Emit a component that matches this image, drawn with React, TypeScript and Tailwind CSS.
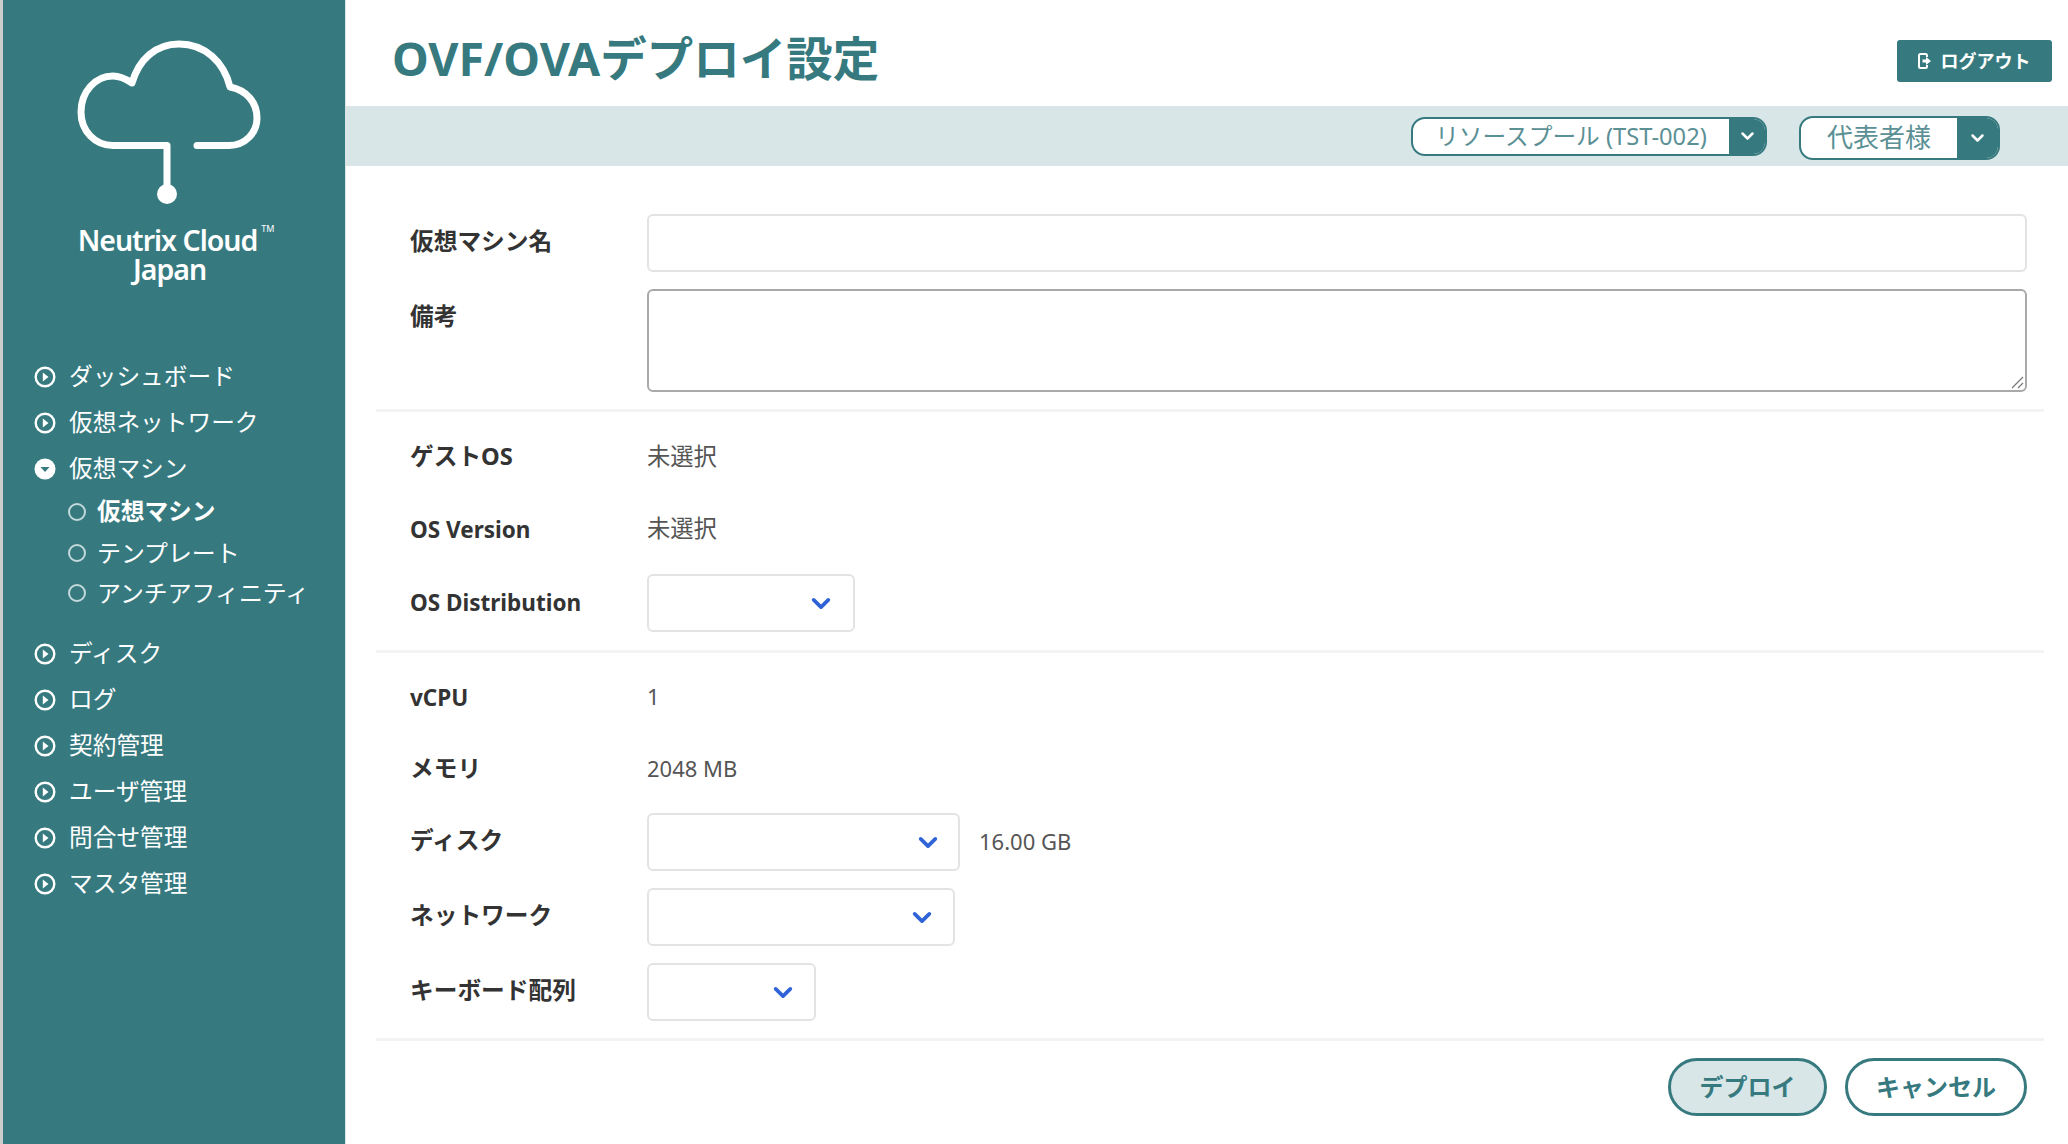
import React from "react";

function Chevron({ className }: { className: string }) {
  return (
    <svg viewBox="0 0 18 12" className={className} fill="none" stroke="currentColor" strokeWidth="3" strokeLinecap="round" strokeLinejoin="round">
      <path d="M3 3l6 6 6-6" />
    </svg>
  );
}

function Logo() {
  return (
    <svg viewBox="0 0 342 210" className="w-[342px] h-[210px] block" fill="none">
      <path
        d="M194 145.500H226C242 145.500 254 133 254 118C254 102 243 90 227 87C221 62 202 44 176 44C153 44 136 59 129 83C123 79 117 76 110 76C92 76 78 92 78 112C78 131 92 145.500 110 145.500H164V185"
        stroke="#fff"
        strokeWidth="7"
        strokeLinecap="round"
        strokeLinejoin="round"
      />
      <circle cx="164" cy="194" r="10" fill="#fff" />
    </svg>
  );
}

function NavIcon({ open }: { open?: boolean }) {
  return open ? (
    <svg viewBox="0 0 22 22" className="w-[22px] h-[22px] shrink-0">
      <circle cx="11" cy="11" r="10.5" fill="#fff" />
      <path d="M6.500 9h9L11 14z" fill="#367a7f" />
    </svg>
  ) : (
    <svg viewBox="0 0 22 22" className="w-[22px] h-[22px] shrink-0">
      <circle cx="11" cy="11" r="9.300" fill="none" stroke="#fff" strokeWidth="2.400" />
      <path d="M8.800 6.500L14.500 11l-5.700 4.500z" fill="#fff" />
    </svg>
  );
}

function NavItem({ label, open }: { label: string; open?: boolean }) {
  return (
    <div className="flex items-center h-[46px] pl-[31px] gap-[13px] text-[23.7px] text-white">
      <NavIcon open={open} />
      <span>{label}</span>
    </div>
  );
}

function SubItem({ label, bold }: { label: string; bold?: boolean }) {
  return (
    <div className={`flex items-center h-[40.5px] pl-[65px] gap-[11px] text-white ${bold ? "text-[23.7px]" : "text-[23.9px]"}`}>
      <span className="w-[18px] h-[18px] shrink-0 rounded-full border-2 border-[#c3d9db]" />
      <span className={bold ? "font-bold" : ""}>{label}</span>
    </div>
  );
}

function Select({ className, arrowClass }: { className: string; arrowClass: string }) {
  return (
    <div className={`h-[58px] flex items-center justify-end bg-white border-2 border-[#e3e3e3] rounded-[6px] ${className}`}>
      <Chevron className={`w-[22px] h-[15px] text-[#2f63d6] ${arrowClass}`} />
    </div>
  );
}

function Label({ children, latin }: { children: React.ReactNode; latin?: boolean }) {
  return (
    <div className={`w-[237px] shrink-0 font-bold text-[#333] ${latin ? "text-[22.5px] pb-[1px]" : "text-[23.7px] pb-[2px]"}`}>
      {children}
    </div>
  );
}

function Value({ children, latin }: { children: React.ReactNode; latin?: boolean }) {
  return <div className={`pb-[3px] text-[#555] ${latin ? "text-[22px]" : "text-[23.3px]"}`}>{children}</div>;
}

function Pill({ text, textClass, className, arrowClass }: { text: string; textClass: string; className: string; arrowClass: string }) {
  return (
    <div className={`flex rounded-[14px] border-2 border-[#367a7f] overflow-hidden bg-white ${className}`}>
      <div className={`flex-1 flex items-center justify-center text-[#5b9095] whitespace-nowrap ${textClass}`}>{text}</div>
      <div className={`flex items-center justify-center bg-[#367a7f] ${arrowClass}`}>
        <Chevron className="w-[15px] h-[10px] text-white" />
      </div>
    </div>
  );
}

export default function App() {
  const rows = ["ダッシュボード", "仮想ネットワーク"];
  const rows2 = ["ディスク", "ログ", "契約管理", "ユーザ管理", "問合せ管理", "マスタ管理"];
  return (
    <div className="flex w-[2068px] h-[1144px] overflow-hidden bg-white font-['Noto_Sans','Noto_Sans_CJK_JP',sans-serif]">
      <aside className="w-[346px] shrink-0 bg-[#367a7f] border-l-[3px] border-l-[#cdcdcd] border-r border-r-[#d8e6e8] flex flex-col">
        <div className="h-[354px]">
          <Logo />
          <div className="mt-[16px] w-[333px] text-center text-white font-semibold text-[28.5px] leading-[29px] tracking-[-1px]">
            Neutrix Cloud
            <span className="inline-block w-0 whitespace-nowrap align-top ml-[4px] -mt-[4px] text-[9px] leading-[14px] font-normal tracking-normal">TM</span>
            <br />
            Japan
          </div>
        </div>
        <nav className="flex flex-col">
          {rows.map((r) => (
            <NavItem key={r} label={r} />
          ))}
          <NavItem label="仮想マシン" open />
          <SubItem label="仮想マシン" bold />
          <SubItem label="テンプレート" />
          <SubItem label="アンチアフィニティ" />
          <div className="h-[17px]" />
          {rows2.map((r) => (
            <NavItem key={r} label={r} />
          ))}
        </nav>
      </aside>
      <main className="flex-1 flex flex-col min-w-0">
        <header className="h-[106px] flex items-start justify-between pl-[46px] pr-[16px]">
          <h1 className="mt-[29px] text-[46.500px] leading-[58px] font-bold text-[#367a7f] whitespace-nowrap">OVF/OVAデプロイ設定</h1>
          <button className="mt-[40px] w-[155px] h-[42px] pr-[2px] rounded-[3px] bg-[#367a7f] text-white font-bold text-[18px] flex items-center justify-center gap-[10px]">
            <svg viewBox="0 0 14 16" className="w-[14px] h-[16px]" fill="none">
              <path d="M10 4V2.500A1.500 1.500 0 0 0 8.500 1h-5A1.500 1.500 0 0 0 2 2.500v11A1.500 1.500 0 0 0 3.500 15h5a1.500 1.500 0 0 0 1.500-1.500V12" stroke="#fff" strokeWidth="2" />
              <path d="M5.500 6.500H9V4l5 4-5 4V9.500H5.500z" fill="#fff" />
            </svg>
            ログアウト
          </button>
        </header>
        <div className="h-[60px] bg-[#d8e6e8] flex items-center justify-end pr-[68px] gap-[32px]">
          <Pill text="リソースプール (TST-002)" textClass="text-[23.700px] pt-[1px]" className="w-[356px] h-[39px]" arrowClass="w-[36px]" />
          <Pill text="代表者様" textClass="text-[26px] pb-[2px]" className="w-[201px] h-[44px] mt-[4px]" arrowClass="w-[41px]" />
        </div>
        <form className="ml-[30px] mr-[24px] flex flex-col pt-[48px]">
          <div className="flex items-center pl-[34px] pr-[17px] h-[58px]">
            <div className="pb-[1px]"><Label>仮想マシン名</Label></div>
            <div className="flex-1 h-full bg-white border-2 border-[#e3e3e3] rounded-[6px]" />
          </div>
          <div className="flex pl-[34px] pr-[17px] mt-[17px] h-[103px]">
            <div className="pt-[10px]"><Label>備考</Label></div>
            <div className="flex-1 h-full bg-white border-2 border-[#a9a9a9] rounded-[6px] relative">
              <svg viewBox="0 0 14 14" className="absolute right-[1px] bottom-[1px] w-[14px] h-[14px]" stroke="#777" strokeWidth="1.200">
                <path d="M2 13L13 2M8 13l5-5" />
              </svg>
            </div>
          </div>
          <div className="h-[3px] bg-[#f3f3f3] mt-[17px]" />
          <div className="flex items-center pl-[34px] h-[72px] mt-[10px]">
            <Label>ゲストOS</Label>
            <Value>未選択</Value>
          </div>
          <div className="flex items-center pl-[34px] h-[72px]">
            <Label latin>OS Version</Label>
            <Value>未選択</Value>
          </div>
          <div className="flex items-center pl-[34px] mt-[8px]">
            <Label latin>OS Distribution</Label>
            <Select className="w-[208px]" arrowClass="mr-[21px]" />
          </div>
          <div className="h-[3px] bg-[#f3f3f3] mt-[18px]" />
          <div className="flex items-center pl-[34px] h-[72px] mt-[9px]">
            <Label latin>vCPU</Label>
            <Value latin>1</Value>
          </div>
          <div className="flex items-center pl-[34px] h-[72px]">
            <Label>メモリ</Label>
            <Value latin>2048 MB</Value>
          </div>
          <div className="flex items-center pl-[34px] mt-[7px]">
            <Label>ディスク</Label>
            <Select className="w-[313px]" arrowClass="mr-[19px]" />
            <div className="ml-[19px] pt-[2px]"><Value latin>16.00 GB</Value></div>
          </div>
          <div className="flex items-center pl-[34px] mt-[17px]">
            <Label>ネットワーク</Label>
            <Select className="w-[308px]" arrowClass="mr-[20px]" />
          </div>
          <div className="flex items-center pl-[34px] mt-[17px]">
            <Label>キーボード配列</Label>
            <Select className="w-[169px]" arrowClass="mr-[20px]" />
          </div>
          <div className="h-[3px] bg-[#f3f3f3] mt-[17px]" />
          <div className="flex justify-end gap-[18px] pr-[17px] mt-[17px]">
            <button className="w-[159px] h-[58px] rounded-full border-[3px] border-[#367a7f] bg-[#d8e6e8] text-[#367a7f] font-bold text-[24px] pb-[1px]">デプロイ</button>
            <button className="w-[182px] h-[58px] rounded-full border-[3px] border-[#367a7f] bg-white text-[#367a7f] font-bold text-[24px] pb-[1px]">キャンセル</button>
          </div>
        </form>
      </main>
    </div>
  );
}
